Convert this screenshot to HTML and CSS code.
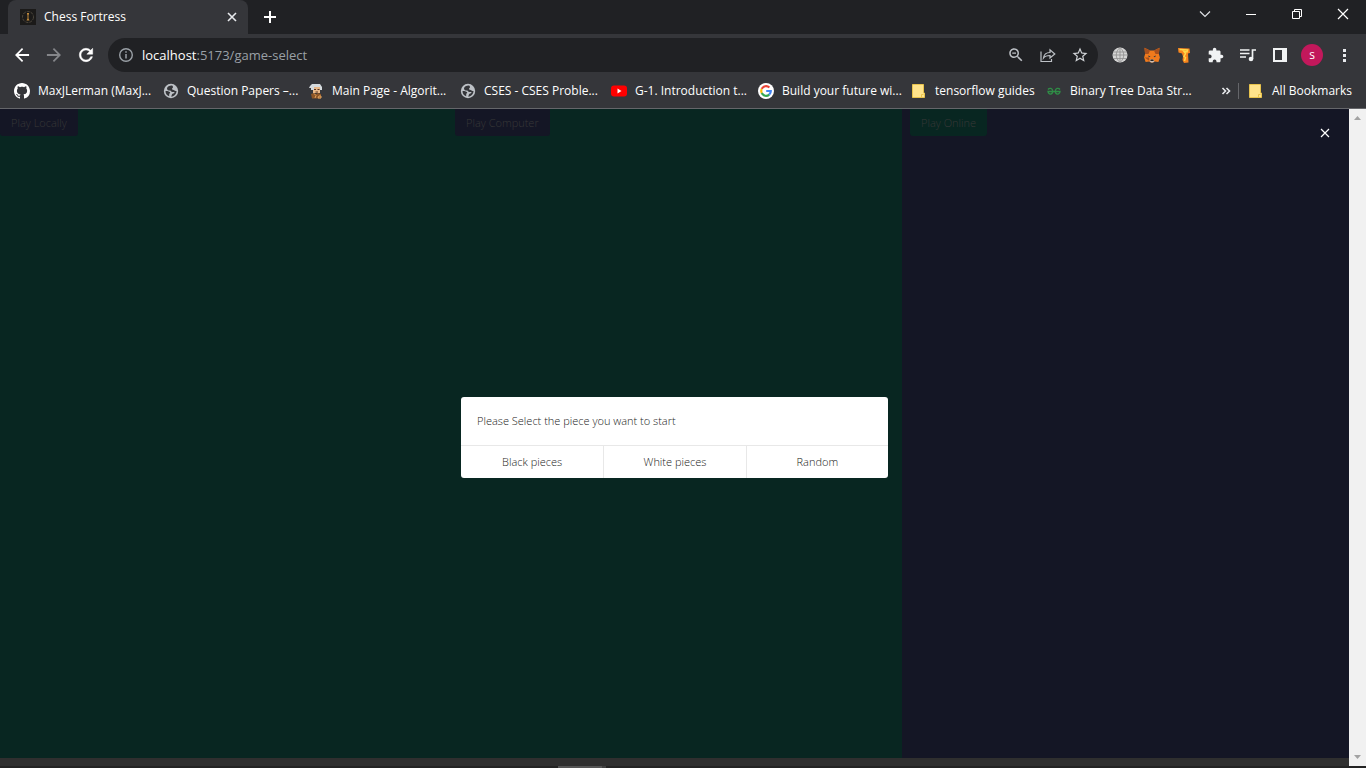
FILE: index.html
```html
<!DOCTYPE html>
<html lang="en">
<head>
<meta charset="utf-8">
<title>Chess Fortress</title>
<link rel="stylesheet" href="styles.css">
</head>
<body>
<svg class="defs" aria-hidden="true">
  <symbol id="globe" viewBox="0 0 16 16">
    <circle cx="8" cy="8" r="7.2" fill="#bdc1c6"/>
    <path d="M8.600 2.500C6.500 2.500 4 3.500 4 5.500c0 1.800 1.500 2 3 2 1.200 0 1 1.500 2.200 1.500h2.300c0 1.500-1 1.500-2 1.800-.8.300-.5 1.700-1.500 2.700 3 .3 5.500-2.500 5.500-5.500-1 .3-1.800 0-2.300-.7-.6-.8-2.200-.3-2.200-1.300s1-.8 1-2c0-.8-.6-1.500-1.400-1.500zM2.500 8c0 3 1.500 4.600 3.700 5.200V11.500c0-1.500 1-1.200 1-2S5 8 2.500 8z" fill="#35363a"/>
  </symbol>
  <symbol id="folder" viewBox="0 0 16 16">
    <path d="M1.500 1.500h11V10h1v4.500h-12z" fill="#ffe38b" stroke="#e8c34c"/>
    <path d="M10.500 14V11.500h2" fill="none" stroke="#e8c34c"/>
  </symbol>
</svg>
<div class="browser">
  <header>
    <div class="tabstrip">
      <div class="tab">
        <svg class="i16" viewBox="0 0 16 16"><path fill="#1b1a19" d="M0 0h16v16H0z"/><circle cx="8" cy="8" r="5.500" fill="none" stroke="#4c463c" stroke-dasharray="3 1"/><path d="M7 4h2v1.500h-.5v4l1 2h-3l1-2v-4H7z" fill="#c28a3c"/></svg>
        <span class="tab-title">Chess Fortress</span>
        <button class="icon-btn" aria-label="Close tab"><svg class="i16" viewBox="0 0 16 16"><path d="M4 4l8 8M12 4l-8 8" stroke="#e8eaed" stroke-width="1.600"/></svg></button>
      </div>
      <button class="icon-btn new-tab" aria-label="New tab"><svg class="i16" viewBox="0 0 16 16"><path d="M8 2v12M2 8h12" stroke="#fff" stroke-width="2"/></svg></button>
      <div class="window-controls">
        <button class="icon-btn" aria-label="Search tabs"><svg class="i16" viewBox="0 0 16 16"><path d="M3 5.500l5 5 5-5" fill="none" stroke="#dfe1e5" stroke-width="1.200"/></svg></button>
        <button class="icon-btn" aria-label="Minimize"><svg class="i16" viewBox="0 0 16 16"><path d="M3 8.500h10" stroke="#fff"/></svg></button>
        <button class="icon-btn" aria-label="Restore"><svg class="i16" viewBox="0 0 16 16"><path d="M3.500 5.500h7v7h-7zM5.500 5.500v-2h7v7h-2" fill="none" stroke="#fff"/></svg></button>
        <button class="icon-btn" aria-label="Close window"><svg class="i16" viewBox="0 0 16 16"><path d="M3 3l10 10M13 3L3 13" stroke="#fff" stroke-width="1.200"/></svg></button>
      </div>
    </div>
    <div class="toolbar">
      <div class="nav">
        <button class="icon-btn" aria-label="Back"><svg class="i20" viewBox="0 0 24 24"><path fill="#fff" d="M20.500 10.800H7.830l5.590-5.590L12 3.600 3.600 12l8.400 8.400 1.410-1.610L7.830 13.200H20.500z"/></svg></button>
        <button class="icon-btn" aria-label="Forward"><svg class="i20" viewBox="0 0 24 24"><path fill="#85868a" d="M3.500 10.800h12.670l-5.590-5.590L12 3.600l8.400 8.400-8.400 8.400-1.410-1.610 5.580-5.590H3.500z"/></svg></button>
        <button class="icon-btn" aria-label="Reload"><svg class="i20" viewBox="0 0 24 24"><path fill="#fff" stroke="#fff" stroke-width=".6" d="M17.650 6.350C16.200 4.900 14.210 4 12 4c-4.420 0-7.990 3.580-7.990 8s3.570 8 7.990 8c3.730 0 6.840-2.550 7.730-6h-2.080c-.82 2.330-3.040 4-5.650 4-3.310 0-6-2.690-6-6s2.690-6 6-6c1.660 0 3.140.69 4.220 1.780L13 11h7V4l-2.350 2.350z"/></svg></button>
      </div>
      <div class="omnibox">
        <svg class="i16" viewBox="0 0 16 16"><circle cx="8" cy="8" r="6.300" fill="none" stroke="#9aa0a6" stroke-width="1.400"/><path d="M8 7v4.500M8 4.300v1.500" stroke="#9aa0a6" stroke-width="1.500"/></svg>
        <a class="url" href="#"><span class="host">localhost</span>:5173/game-select</a>
        <button class="icon-btn" aria-label="Zoom"><svg class="i18" viewBox="0 0 24 24"><path fill="#bdc1c6" d="M15.500 14h-.79l-.28-.27C15.410 12.590 16 11.110 16 9.500 16 5.910 13.090 3 9.500 3S3 5.910 3 9.500 5.910 16 9.500 16c1.610 0 3.090-.59 4.230-1.570l.27.28v.79l5 4.990L20.490 19l-4.990-5zm-6 0C7.010 14 5 11.990 5 9.500S7.010 5 9.500 5 14 7.010 14 9.500 11.990 14 9.500 14zM7 8.800h5v1.400H7z"/></svg></button>
        <button class="icon-btn" aria-label="Share"><svg class="i16" viewBox="0 0 16 16"><path d="M1 4.500v10h10.500V12M3.500 11c.5-4 3-5.500 6.500-5.500V2.800L14.800 7 10 11V8.500c-3 0-5 .5-6.500 2.500z" fill="none" stroke="#bdc1c6" stroke-width="1.200"/></svg></button>
        <button class="icon-btn" aria-label="Bookmark this tab"><svg class="i18" viewBox="0 0 24 24"><path fill="#d0d3d7" d="M22 9.240l-7.190-.62L12 2 9.190 8.630 2 9.240l5.460 4.730L5.820 21 12 17.270 18.180 21l-1.630-7.030L22 9.240zM12 15.400l-3.760 2.270 1-4.280-3.320-2.880 4.380-.38L12 6.100l1.710 4.040 4.380.38-3.320 2.880 1 4.280L12 15.400z"/></svg></button>
      </div>
      <div class="extensions">
        <button class="icon-btn" aria-label="Globe extension"><svg class="i16" viewBox="0 0 16 16"><circle cx="8" cy="8" r="7.500" fill="#d5d5d5"/><path d="M8 .5v15M1 5h14M.5 8h15M1 11.500h14M8 .5c-5 4.500-5 10.500 0 15M8 .5c5 4.500 5 10.500 0 15" fill="none" stroke="#8d8d8d" stroke-width=".8"/></svg></button>
        <button class="icon-btn" aria-label="MetaMask"><svg class="i16" viewBox="0 0 16 16"><path d="M.5.8L6 3.500h4l5.500-2.700-.6 6.200 1 3.500-1.500 4.500-3.700-.5L9 15.500H7L5.300 14.500 1.600 15 .1 10.500l1-3.500z" fill="#f07a1c"/><path d="M.5.8L6 3.500 4.500 7 1.100 7zM15.500.8L10 3.500l1.500 3.500 3.400 0zM.8 10.500l4.200 0 .3 3.500z" fill="#a8501d"/><path d="M4 8.500l2.500 1-1.500.8zM12 8.500l-2.500 1 1.500.8z" fill="#233447"/><path d="M6 12.500h4l.3 2L9 15.500H7l-1.300-1z" fill="#cdbdb2"/><path d="M6.600 12.500h2.800l.3 1.500H6.300z" fill="#252525"/></svg></button>
        <button class="icon-btn" aria-label="Tab extension"><svg class="i16" viewBox="0 0 16 16"><path d="M2 1l11.500.5.5 4.500-2 .5.5 9-4.500.5-1.500-3L7 9.500 6 6.500 2.500 5.500z" fill="#f7841e"/><path d="M3.500 2.500l8 .5-.5 2-3-.5 1.500 2-1.500 3 1.500 1-1 3.500" fill="none" stroke="#ffd84a" stroke-width="1.500"/></svg></button>
        <button class="icon-btn" aria-label="Extensions"><svg class="i16" viewBox="1 0 23 23"><path fill="#f1f3f4" d="M20.500 11H19V7c0-1.100-.9-2-2-2h-4V3.500C13 2.120 11.880 1 10.500 1S8 2.120 8 3.500V5H4c-1.100 0-1.990.9-1.990 2v3.800H3.500c1.490 0 2.700 1.210 2.700 2.700s-1.210 2.700-2.700 2.700H2V20c0 1.100.9 2 2 2h3.800v-1.500c0-1.490 1.210-2.700 2.700-2.700 1.490 0 2.700 1.210 2.700 2.700V22H17c1.100 0 2-.9 2-2v-4h1.500c1.380 0 2.500-1.120 2.500-2.500S21.880 11 20.500 11z"/></svg></button>
        <button class="icon-btn" aria-label="Media controls"><svg class="i16" viewBox="0 0 16 16"><path d="M0 3h9.500M0 6.500h9.500M0 10h6M12.500 12V3H16" fill="none" stroke="#f1f3f4" stroke-width="1.700"/><circle cx="11" cy="12" r="2.300" fill="#f1f3f4"/></svg></button>
        <button class="icon-btn" aria-label="Side panel"><svg class="i16" viewBox="0 0 16 16"><path fill="#f1f3f4" fill-rule="evenodd" d="M1 1h14v14H1zM3 3v10h7V3z"/></svg></button>
        <button class="icon-btn avatar" aria-label="Profile">s</button>
        <button class="icon-btn" aria-label="Menu"><svg class="i16" viewBox="0 0 16 16"><path d="M7 2h3v3H7zM7 7h3v3H7zM7 12h3v3H7z" fill="#e8eaed"/></svg></button>
      </div>
    </div>
    <nav class="bookmarks">
      <div class="bookmark-list">
        <a href="#"><svg class="i16" viewBox="0 0 16 16"><path fill="#fff" d="M8 0C3.580 0 0 3.580 0 8c0 3.540 2.290 6.530 5.470 7.590.4.070.55-.17.55-.38 0-.19-.01-.82-.01-1.490-2.010.37-2.530-.49-2.690-.94-.09-.23-.48-.94-.82-1.130-.28-.15-.68-.52-.01-.53.63-.01 1.080.58 1.230.82.72 1.210 1.870.87 2.330.66.070-.52.28-.87.51-1.070-1.780-.2-3.640-.89-3.640-3.950 0-.87.31-1.590.82-2.150-.08-.2-.36-1.020.08-2.120 0 0 .67-.21 2.200.82.64-.18 1.320-.27 2-.27s1.360.090 2 .27c1.530-1.040 2.200-.82 2.200-.82.44 1.100.16 1.920.080 2.120.51.56.82 1.270.82 2.150 0 3.070-1.870 3.750-3.650 3.950.29.25.54.73.54 1.480 0 1.070-.01 1.930-.01 2.200 0 .21.15.46.55.38A8.010 8.010 0 0 0 16 8c0-4.420-3.580-8-8-8z"/></svg>MaxJLerman (MaxJ...</a>
        <a href="#"><svg class="i16"><use href="#globe"/></svg>Question Papers –...</a>
        <a href="#"><svg class="i16" viewBox="0 0 16 16"><path d="M5 3h7v7H5z" fill="#e9b98a"/><path d="M2 3l2-2h8l2 3v3h-2V4H6v3H3V5H1z" fill="#d5dadd"/><path d="M6 6.500h2M9.500 6.500h2M7.500 9h2.500" stroke="#5a3420"/><path d="M3 11l3-1 2 1 2-1 3 1v4.500H4z" fill="#8d5526"/><path d="M6 10.500l2 2-1 2.500M11 13h2v2h-3z" stroke="#e2a45f" fill="none"/></svg>Main Page - Algorit...</a>
        <a href="#"><svg class="i16"><use href="#globe"/></svg>CSES - CSES Proble...</a>
        <a href="#"><svg class="i16" viewBox="0 0 16 16"><rect y="2.500" width="16" height="11" rx="3" fill="#f00"/><path d="M6.500 5.500L10.500 8l-4 2.500z" fill="#fff"/></svg>G-1. Introduction t...</a>
        <a href="#"><svg class="i16" viewBox="0 0 16 16"><circle cx="8" cy="8" r="8" fill="#fff"/><g fill="none" stroke-width="2.200"><path d="M11.400 4.500A4.800 4.800 0 0 0 3.700 5.900" stroke="#ea4335"/><path d="M3.700 5.900a4.800 4.800 0 0 0 0 4.200" stroke="#fbbc05"/><path d="M3.700 10.100a4.800 4.800 0 0 0 7.500 1.500" stroke="#34a853"/><path d="M11.200 11.600A4.800 4.800 0 0 0 12.800 8H8.200" stroke="#4285f4"/></g></svg>Build your future wi...</a>
        <a href="#"><svg class="i16"><use href="#folder"/></svg>tensorflow guides</a>
        <a href="#"><svg class="i16" viewBox="0 0 16 16"><path d="M2 6.500C3.500 4.500 6.700 5 6.700 8.300c0 3.700-4.200 3.700-4.700.2h12c-.5 3.500-4.700 3.500-4.700-.2 0-3.300 3.200-3.800 4.700-1.800" fill="none" stroke="#2f8d46" stroke-width="1.300"/></svg>Binary Tree Data Str...</a>
      </div>
      <button class="icon-btn more" aria-label="More bookmarks"><svg class="i16" viewBox="0 0 16 16"><path d="M4.500 5l3 3-3 3M8.500 5l3 3-3 3" fill="none" stroke="#e8eaed" stroke-width="1.600"/></svg></button>
      <a class="all" href="#"><svg class="i16"><use href="#folder"/></svg>All Bookmarks</a>
    </nav>
  </header>
  <div class="viewport">
    <main class="page">
      <section class="mode"><button class="play">Play Locally</button></section>
      <section class="mode computer"><button class="play">Play Computer</button></section>
      <section class="mode online"><button class="play">Play Online</button></section>
      <div class="overlay">
        <div class="dialog" role="dialog" aria-labelledby="prompt">
          <p class="prompt" id="prompt">Please Select the piece you want to start</p>
          <div class="choices">
            <button>Black pieces</button>
            <button>White pieces</button>
            <button>Random</button>
          </div>
        </div>
        <button class="icon-btn dismiss" aria-label="Close dialog"><svg class="i16" viewBox="0 0 16 16"><path d="M4 4l8 8M12 4l-8 8" stroke="#fff" stroke-width="1.200"/></svg></button>
      </div>
    </main>
    <div class="scrollbar" aria-hidden="true">
      <svg class="arrow" viewBox="0 0 17 17"><path d="M5 11h7L8.500 7z" fill="#a3a3a3"/></svg>
      <svg class="arrow" viewBox="0 0 17 17"><path d="M5 6h7l-3.500 4z" fill="#a3a3a3"/></svg>
    </div>
  </div>
  <footer class="taskbar"><span class="task"></span><span class="task-edge"></span></footer>
</div>
</body>
</html>
```
FILE: styles.css
```css
* { box-sizing: border-box; }
body { margin: 0; font: 12px/16px "Open Sans", "Noto Sans", sans-serif; color: #fff; }
button { font: inherit; color: inherit; border: 0; background: none; padding: 0; }
a { color: inherit; text-decoration: none; }
svg { display: block; flex: none; }
.defs { position: absolute; width: 0; height: 0; }
.i16 { width: 16px; height: 16px; }
.i18 { width: 18px; height: 18px; }
.i20 { width: 20px; height: 20px; }
.icon-btn { display: grid; place-items: center; flex: none; }
.browser { display: flex; flex-direction: column; height: 100vh; background: #35363a; }

.tabstrip { display: flex; height: 34px; background: #202124; padding-left: 8px; }
.tab { display: flex; align-items: center; gap: 8px; width: 240px; padding: 0 8px 0 12px; background: #35363a; border-radius: 8px 8px 0 0; }
.tab-title { flex: 1; }
.new-tab { width: 44px; }
.window-controls { display: flex; margin-left: auto; height: 28px; }
.window-controls .icon-btn { width: 46px; }

.toolbar { display: flex; align-items: center; height: 38px; padding: 0 14px 0 12px; gap: 12px; margin-top: 2px; }
.nav { display: flex; gap: 12px; }
.omnibox { display: flex; align-items: center; gap: 15px; flex: 1; height: 34px; padding: 0 9px 0 10px; border-radius: 17px; background: #202124; }
.url { flex: 1; margin-left: -7px; font-size: 13px; line-height: 20px; color: #9aa0a6; }
.host { color: #fff; }
.extensions { display: flex; align-items: center; gap: 16px; margin-left: 2px; }
.avatar { width: 22px; height: 22px; margin: 0 -3px; border-radius: 50%; background: #c2185b; }

.bookmarks { display: flex; align-items: center; height: 35px; padding: 0 14px; border-bottom: 1px solid #65666a; white-space: nowrap; }
.bookmarks a { display: flex; align-items: center; gap: 8px; }
.bookmark-list { display: grid; grid-template-columns: 149px 145px 152px 151px 147px 153px 135px 150px; }
.more { margin-left: auto; padding-right: 4px; }
.all { border-left: 1px solid #65666a; padding-left: 9px; }

.viewport { display: flex; flex: 1; background: #f1f1f1; }
.page { position: relative; display: flex; flex: 1; background: #082621; border-bottom: 8px solid #2f2f2f; font-size: 11px; font-weight: 300; }
.mode { flex: 1 1 0; width: 0; }
.computer { margin-left: 8px; }
.online { background: #141625; display: flex; align-items: flex-start; }
.online .play { margin-left: 8px; background: #082621; }
.play { display: block; height: 27px; padding: 0 11px; border-radius: 0 0 3px 3px; background: #141625; color: #383838; }
.overlay { position: absolute; inset: 0; display: grid; place-items: center; }
.dialog { width: 427px; margin-top: 8px; background: #fff; color: #222; border-radius: 3px; overflow: hidden; }
.prompt { margin: 0; padding: 16px; }
.choices { display: grid; grid-template-columns: repeat(3, 1fr); border-top: 1px solid #e8e8e8; }
.choices button { height: 32px; }
.choices button + button { border-left: 1px solid #e8e8e8; }
.dismiss { position: absolute; top: 16px; right: 16px; }
.scrollbar { display: flex; flex-direction: column; justify-content: space-between; width: 17px; }
.arrow { width: 17px; height: 17px; }
.taskbar { display: flex; justify-content: center; height: 2px; background: #232323; padding-right: 202px; }
.task { width: 44px; background: #555; }
.task-edge { width: 4px; background: #3f3f3f; }
```
